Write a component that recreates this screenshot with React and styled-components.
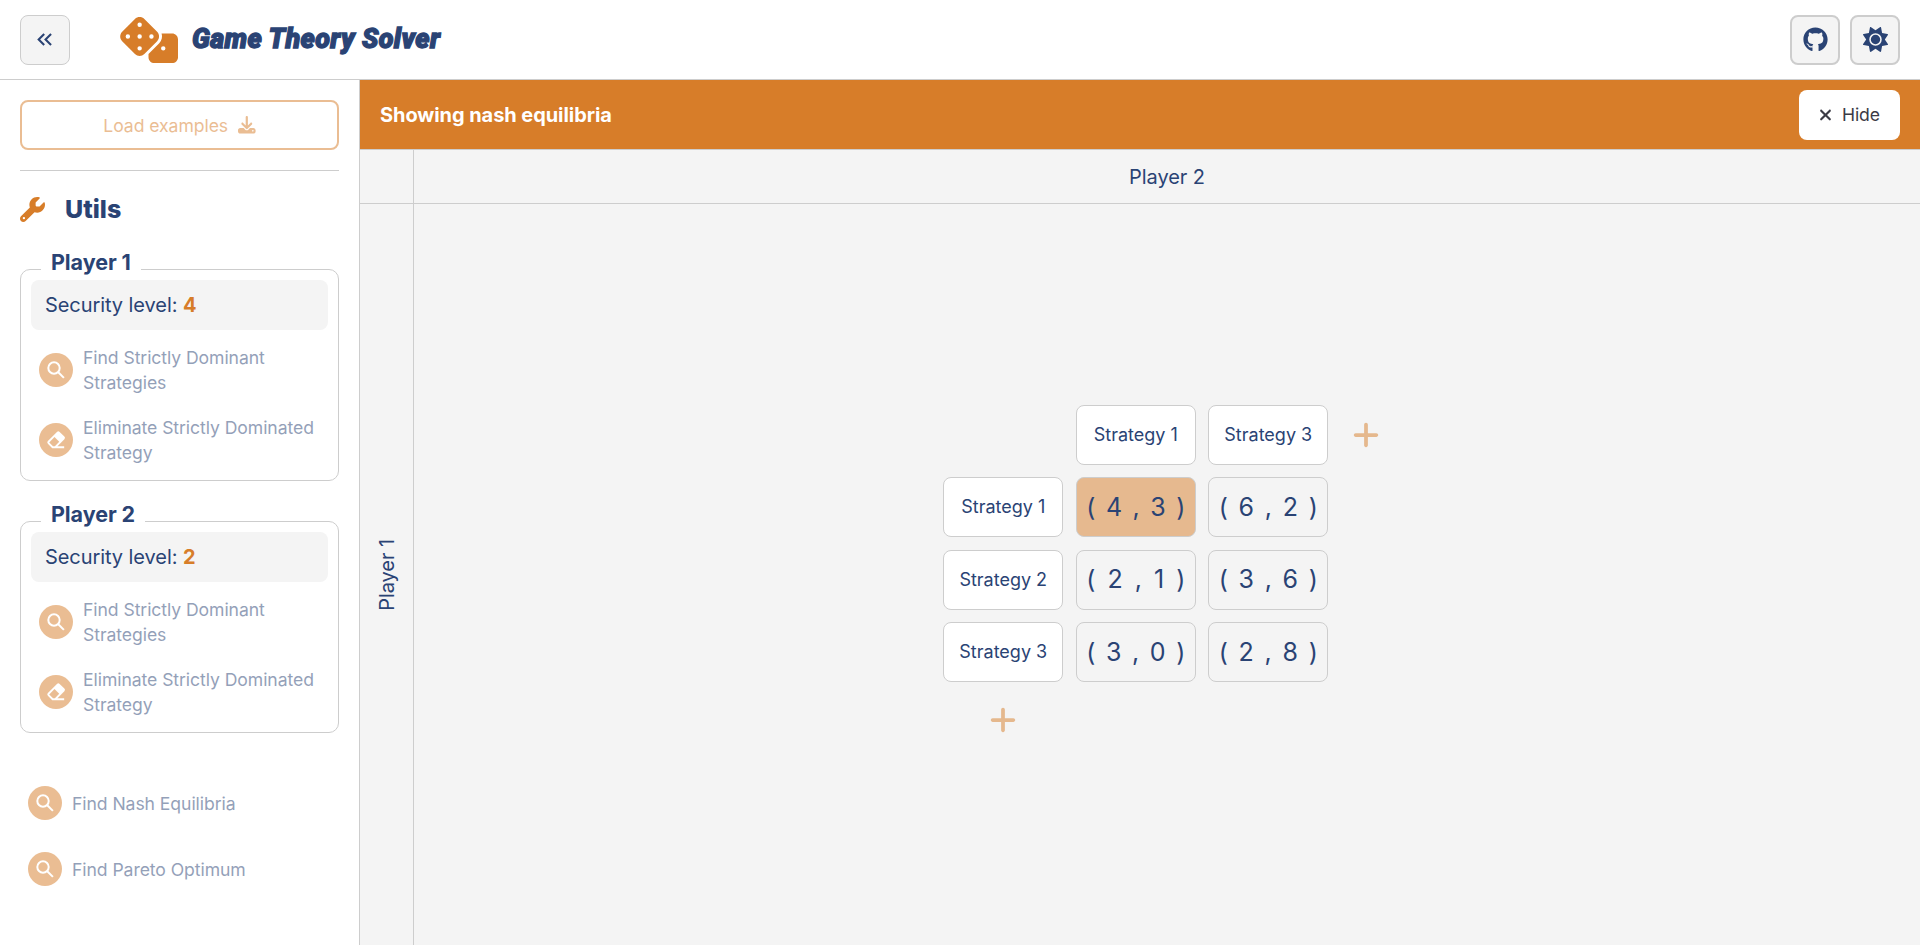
import React from "react";
import styled, { createGlobalStyle } from "styled-components";
import { FaDice, FaDownload, FaWrench, FaGithub, FaSun, FaPlus, FaXmark } from "react-icons/fa6";
import { BiSolidEraser } from "react-icons/bi";
import { MdKeyboardDoubleArrowLeft } from "react-icons/md";

const color = {
  primary: "#d77d29",
  text: "#2a4374",
  surface: "#f4f4f4",
  border: "#cdcdcd",
};

const GlobalStyle = createGlobalStyle`
  *, *::before, *::after { box-sizing: border-box; }
  body {
    margin: 0;
    font-family: Inter, "Liberation Sans", sans-serif;
    font-size: 20px;
    letter-spacing: -0.07px;
    color: ${color.text};
    background: #fff;
  }
  button { font: inherit; letter-spacing: inherit; color: inherit; }
  svg { display: block; flex: none; }
`;

const Page = styled.div`
  display: flex;
  flex-direction: column;
  height: 100vh;
  overflow: hidden;
`;

const Header = styled.header`
  display: flex;
  align-items: center;
  height: 80px;
  padding: 0 20px;
  border-bottom: 1px solid ${color.border};
`;

const SquareButton = styled.button`
  display: flex;
  align-items: center;
  justify-content: center;
  width: 50px;
  height: 50px;
  padding: 0;
  border: 2px solid ${color.border};
  border-radius: 8px;
  background: ${color.surface};
  font-size: 25px;
`;

const ToggleButton = styled(SquareButton)`
  padding-right: 2px;
  border-width: 1px;
`;

const Brand = styled.div`
  display: flex;
  align-items: center;
  gap: 14px;
  margin-left: 49px;
  color: ${color.primary};
`;

const BrandName = styled.h1`
  margin: 0 0 1px;
  font-family: Roboto, sans-serif;
  font-weight: 900;
  font-style: italic;
  font-size: 27px;
  line-height: 40px;
  letter-spacing: 0.4px;
  white-space: nowrap;
  color: ${color.text};
  -webkit-text-stroke: 1.3px ${color.text};
`;

const HeaderActions = styled.div`
  display: flex;
  gap: 10px;
  margin-left: auto;
`;

const Body = styled.div`
  display: flex;
  flex: 1;
  min-height: 0;
`;

const Sidebar = styled.aside`
  display: flex;
  flex-direction: column;
  width: 360px;
  padding: 20px;
  border-right: 1px solid ${color.border};
`;

const LoadButton = styled.button`
  display: flex;
  align-items: center;
  justify-content: center;
  gap: 10px;
  height: 50px;
  flex: none;
  border: 2px solid ${color.primary};
  border-radius: 8px;
  background: transparent;
  color: ${color.primary};
  font-size: 17.6px;
  opacity: 0.5;
`;

const Divider = styled.hr`
  width: 100%;
  height: 1px;
  flex: none;
  margin: 20px 0;
  border: 0;
  background: ${color.border};
`;

const SectionTitle = styled.h2`
  display: flex;
  align-items: center;
  gap: 20px;
  height: 36px;
  margin: 0 0 2px;
  font-size: 25px;
  font-weight: 800;
  letter-spacing: 0;
  svg { color: ${color.primary}; }
`;

const PlayerBox = styled.fieldset`
  min-width: 0;
  margin: 24px 0 0;
  padding: 0 10px 10px;
  border: 1px solid ${color.border};
  border-radius: 10px;
`;

const PlayerLegend = styled.legend`
  margin-left: 10px;
  padding: 0 10px 15px;
  font-size: 21.5px;
  font-weight: 700;
  line-height: 18px;
`;

const SecurityLevel = styled.div`
  height: 50px;
  margin-top: -6px;
  padding: 0 14px;
  border-radius: 8px;
  background: ${color.surface};
  line-height: 50px;
  strong { color: ${color.primary}; }
`;

const Action = styled.button`
  display: flex;
  align-items: center;
  gap: 10px;
  width: 100%;
  height: ${(p) => p.$height}px;
  padding: 0 8px;
  border: 0;
  background: transparent;
  font-size: 17.6px;
  line-height: 25px;
  text-align: left;
  opacity: 0.5;
`;

const ActionIcon = styled.span`
  display: flex;
  align-items: center;
  justify-content: center;
  flex: none;
  width: 34px;
  height: 34px;
  border-radius: 50%;
  background: ${color.primary};
  color: #fff;
  font-size: 23px;
`;

const GlobalActions = styled.div`
  margin-top: 37px;
`;

const Main = styled.main`
  display: flex;
  flex-direction: column;
  flex: 1;
  background: ${color.surface};
`;

const Banner = styled.div`
  display: flex;
  align-items: center;
  justify-content: space-between;
  height: 70px;
  padding: 0 20px;
  border-bottom: 1px solid ${color.border};
  background: ${color.primary};
  color: #fff;
  font-weight: 700;
`;

const HideButton = styled.button`
  display: flex;
  align-items: center;
  gap: 10px;
  height: 50px;
  padding: 0 20px;
  border: 0;
  border-radius: 8px;
  background: #fff;
  color: #3b3b45;
  font-size: 17.6px;
  font-weight: 400;
  svg { width: 13px; height: 18px; }
`;

const Board = styled.div`
  display: grid;
  flex: 1;
  grid-template: 54px 1fr / 54px 1fr;
`;

const BoardCell = styled.div`
  display: flex;
  align-items: center;
  justify-content: center;
  border-right: ${(p) => (p.$right ? 1 : 0)}px solid ${color.border};
  border-bottom: ${(p) => (p.$bottom ? 1 : 0)}px solid ${color.border};
`;

const VerticalLabel = styled.span`
  writing-mode: vertical-rl;
  transform: rotate(180deg);
`;

const Matrix = styled.div`
  display: grid;
  grid-template-columns: repeat(3, 120px) 50px;
  grid-template-rows: repeat(4, 60px) 50px;
  gap: 12.5px;
`;

const Tile = styled.div`
  display: flex;
  align-items: center;
  justify-content: center;
  padding-bottom: 0.8px;
  border: 1px solid ${color.border};
  border-radius: 8px;
`;

const Strategy = styled(Tile)`
  background: #fff;
  font-size: 18px;
  letter-spacing: 0;
`;

const Payoff = styled(Tile)`
  justify-content: space-between;
  padding-left: 9.5px;
  padding-right: 9.5px;
  background: ${(p) => (p.$highlight ? "#e6b98f" : "transparent")};
  font-size: 25px;
`;

const AddButton = styled.button`
  display: flex;
  align-items: center;
  justify-content: center;
  padding: 0;
  border: 0;
  background: transparent;
  color: ${color.primary};
  font-size: 30px;
  opacity: 0.5;
`;

const players = [
  { name: "Player 1", security: 4 },
  { name: "Player 2", security: 2 },
];

const columns = ["Strategy 1", "Strategy 3"];

const rows = [
  { name: "Strategy 1", payoffs: [[4, 3, true], [6, 2]] },
  { name: "Strategy 2", payoffs: [[2, 1], [3, 6]] },
  { name: "Strategy 3", payoffs: [[3, 0], [2, 8]] },
];

function SearchIcon() {
  return (
    <svg width="18" height="18" viewBox="0 0 18 18" fill="none" stroke="currentColor" strokeWidth="2">
      <circle cx="7" cy="7" r="5.7" />
      <path d="M11 11l5.9 5.9" />
    </svg>
  );
}

function SidebarAction({ icon: Icon, height, children }) {
  return (
    <Action $height={height}>
      <ActionIcon><Icon /></ActionIcon>
      <span>{children}</span>
    </Action>
  );
}

export default function App() {
  return (
    <Page>
      <GlobalStyle />
      <Header>
        <ToggleButton><MdKeyboardDoubleArrowLeft /></ToggleButton>
        <Brand>
          <FaDice size={59} />
          <BrandName>Game Theory Solver</BrandName>
        </Brand>
        <HeaderActions>
          <SquareButton><FaGithub /></SquareButton>
          <SquareButton><FaSun /></SquareButton>
        </HeaderActions>
      </Header>
      <Body>
        <Sidebar>
          <LoadButton>Load examples <FaDownload /></LoadButton>
          <Divider />
          <SectionTitle><FaWrench /> Utils</SectionTitle>
          {players.map((player) => (
            <PlayerBox key={player.name}>
              <PlayerLegend>{player.name}</PlayerLegend>
              <SecurityLevel>
                Security level: <strong>{player.security}</strong>
              </SecurityLevel>
              <div>
                <SidebarAction icon={SearchIcon} height={80}>Find Strictly Dominant Strategies</SidebarAction>
                <SidebarAction icon={BiSolidEraser} height={60}>Eliminate Strictly Dominated Strategy</SidebarAction>
              </div>
            </PlayerBox>
          ))}
          <GlobalActions>
            <SidebarAction icon={SearchIcon} height={66}>Find Nash Equilibria</SidebarAction>
            <SidebarAction icon={SearchIcon} height={66}>Find Pareto Optimum</SidebarAction>
          </GlobalActions>
        </Sidebar>
        <Main>
          <Banner>
            <span>Showing nash equilibria</span>
            <HideButton><FaXmark /> Hide</HideButton>
          </Banner>
          <Board>
            <BoardCell $right $bottom />
            <BoardCell $bottom>Player 2</BoardCell>
            <BoardCell $right><VerticalLabel>Player 1</VerticalLabel></BoardCell>
            <BoardCell>
              <Matrix>
                <span />
                {columns.map((name) => <Strategy key={name}>{name}</Strategy>)}
                <AddButton><FaPlus /></AddButton>
                {rows.map((row) => (
                  <React.Fragment key={row.name}>
                    <Strategy>{row.name}</Strategy>
                    {row.payoffs.map(([a, b, highlight], i) => (
                      <Payoff key={i} $highlight={highlight}>
                        <span>(</span><span>{a}</span><span>,</span><span>{b}</span><span>)</span>
                      </Payoff>
                    ))}
                    <span />
                  </React.Fragment>
                ))}
                <AddButton><FaPlus /></AddButton>
              </Matrix>
            </BoardCell>
          </Board>
        </Main>
      </Body>
    </Page>
  );
}
